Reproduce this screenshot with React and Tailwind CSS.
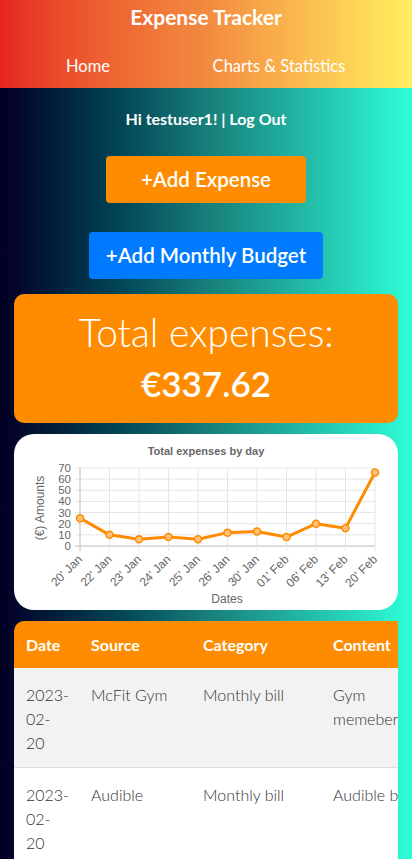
import React from 'react';

const DATA = [
  { label: "20' Jan", value: 25 },
  { label: "22' Jan", value: 10 },
  { label: "23' Jan", value: 6 },
  { label: "24' Jan", value: 8 },
  { label: "25' Jan", value: 6 },
  { label: "26' Jan", value: 12 },
  { label: "30' Jan", value: 13 },
  { label: "01' Feb", value: 8 },
  { label: "06' Feb", value: 20 },
  { label: "13' Feb", value: 16 },
  { label: "20' Feb", value: 66 },
];

const ROWS = [
  { date: '2023-02-20', source: 'McFit Gym', category: 'Monthly bill', content: 'Gym memebership' },
  { date: '2023-02-20', source: 'Audible', category: 'Monthly bill', content: 'Audible books' },
];

function ExpenseChart() {
  const left = 66, right = 361, top = 34, bottom = 112;
  const step = (right - left) / (DATA.length - 1);
  const y = (v) => bottom - (v / 70) * (bottom - top);
  const pts = DATA.map((d, i) => [left + i * step, y(d.value)]);

  return (
    <svg width="384" height="176" viewBox="0 0 384 176" className="block">
      <text x="192" y="21" textAnchor="middle" fontSize="11" fontWeight="700" fill="#666" fontFamily="'Liberation Sans', Arial, sans-serif">
        Total expenses by day
      </text>
      {/* grid */}
      {[0, 10, 20, 30, 40, 50, 60, 70].map((v) => (
        <g key={v}>
          <line x1={left - 5} x2={right} y1={y(v)} y2={y(v)} stroke={v === 0 ? '#bbb' : '#e6e6e6'} strokeWidth="1" />
          <text x="57" y={y(v) + 4} textAnchor="end" fontSize="11.5" fill="#666" fontFamily="'Liberation Sans', Arial, sans-serif">{v}</text>
        </g>
      ))}
      {DATA.map((d, i) => (
        <g key={d.label}>
          <line x1={left + i * step} x2={left + i * step} y1={top} y2={bottom + 5} stroke={i === 0 ? '#bbb' : '#e6e6e6'} strokeWidth="1" />
          <text
            x={left + i * step + 3}
            y={bottom + 14}
            textAnchor="end"
            fontSize="12"
            fill="#666"
            fontFamily="'Liberation Sans', Arial, sans-serif"
            transform={`rotate(-45 ${left + i * step + 3} ${bottom + 14})`}
          >
            {d.label}
          </text>
        </g>
      ))}
      <text x="30" y="74" textAnchor="middle" fontSize="12" fill="#666" fontFamily="'Liberation Sans', Arial, sans-serif" transform="rotate(-90 30 74)">
        (€) Amounts
      </text>
      <text x="213" y="169" textAnchor="middle" fontSize="12" fill="#666" fontFamily="'Liberation Sans', Arial, sans-serif">
        Dates
      </text>
      <polyline points={pts.map((p) => p.join(',')).join(' ')} fill="none" stroke="#ff8c00" strokeWidth="3" strokeLinejoin="round" />
      {pts.map((p, i) => (
        <circle key={i} cx={p[0]} cy={p[1]} r="3.5" fill="#ffc27a" stroke="#ff8c00" strokeWidth="1.5" />
      ))}
    </svg>
  );
}

export default function App() {
  return (
    <div className="min-h-screen bg-gradient-to-r from-[#020024] via-[#187e7a] to-[#2ffed8] text-white" style={{ fontFamily: "Lato, 'Open Sans', sans-serif" }}>
      <header className="h-[88px] bg-gradient-to-r from-[#e52421] via-[#f28a40] to-[#fff060] flex flex-col items-center">
        <h1 className="text-[21px] font-bold leading-none mt-[6px]">Expense Tracker</h1>
        <nav className="w-full flex mt-[27px] text-[16.5px]">
          <a className="w-[176px] text-center">Home</a>
          <a className="flex-1 text-center pr-[30px]">Charts &amp; Statistics</a>
        </nav>
      </header>

      <main className="flex flex-col items-center">
        <p className="mt-[21px] text-[16px] font-bold leading-5">Hi testuser1! | Log Out</p>

        <button className="mt-[27px] w-[200px] h-[47px] rounded-[4px] bg-[#ff8c00] text-[20.5px] font-semibold">
          +Add Expense
        </button>
        <button className="mt-[29px] w-[234px] h-[47px] rounded-[4px] bg-[#007bff] text-[20.5px] font-semibold">
          +Add Monthly Budget
        </button>

        <section className="mt-[15px] w-[384px] h-[129px] rounded-[10px] bg-[#ff8c00] flex flex-col items-center">
          <h2 className="mt-[16px] text-[39px] font-light leading-[44px]">Total expenses:</h2>
          <p className="mt-[8px] text-[35px] font-semibold leading-[42px]">€337.62</p>
        </section>

        <section className="mt-[11px] w-[384px] h-[176px] rounded-[20px] bg-white overflow-hidden">
          <ExpenseChart />
        </section>

        <div className="mt-[11px] w-[384px] overflow-hidden">
          <table className="w-max rounded-t-[10px] overflow-hidden border-collapse text-[16px]">
            <thead>
              <tr className="bg-[#ff8c00] h-[47px] text-left">
                <th className="w-[65px] px-3 font-bold">Date</th>
                <th className="w-[112px] px-3 font-bold">Source</th>
                <th className="w-[130px] px-3 font-bold">Category</th>
                <th className="w-[140px] px-3 font-bold">Content</th>
                <th className="w-[110px] px-3 font-bold">Amount</th>
              </tr>
            </thead>
            <tbody>
              {ROWS.map((r, i) => (
                <tr key={i} className={`${i % 2 === 0 ? 'bg-[#f2f2f2]' : 'bg-white'} border-b border-[#ddd] text-[#333] font-light align-top`}>
                  <td className="px-3 pt-[15px] pb-[12px] leading-6 w-[65px] max-w-[65px]">{r.date.replace(/-/g, '-\u200b')}</td>
                  <td className="px-3 pt-[15px] leading-6">{r.source}</td>
                  <td className="px-3 pt-[15px] leading-6">{r.category}</td>
                  <td className="px-3 pt-[15px] leading-6 max-w-[140px]">{r.content}</td>
                  <td className="px-3 pt-[15px] leading-6">€9.99</td>
                </tr>
              ))}
            </tbody>
          </table>
        </div>
      </main>
    </div>
  );
}
